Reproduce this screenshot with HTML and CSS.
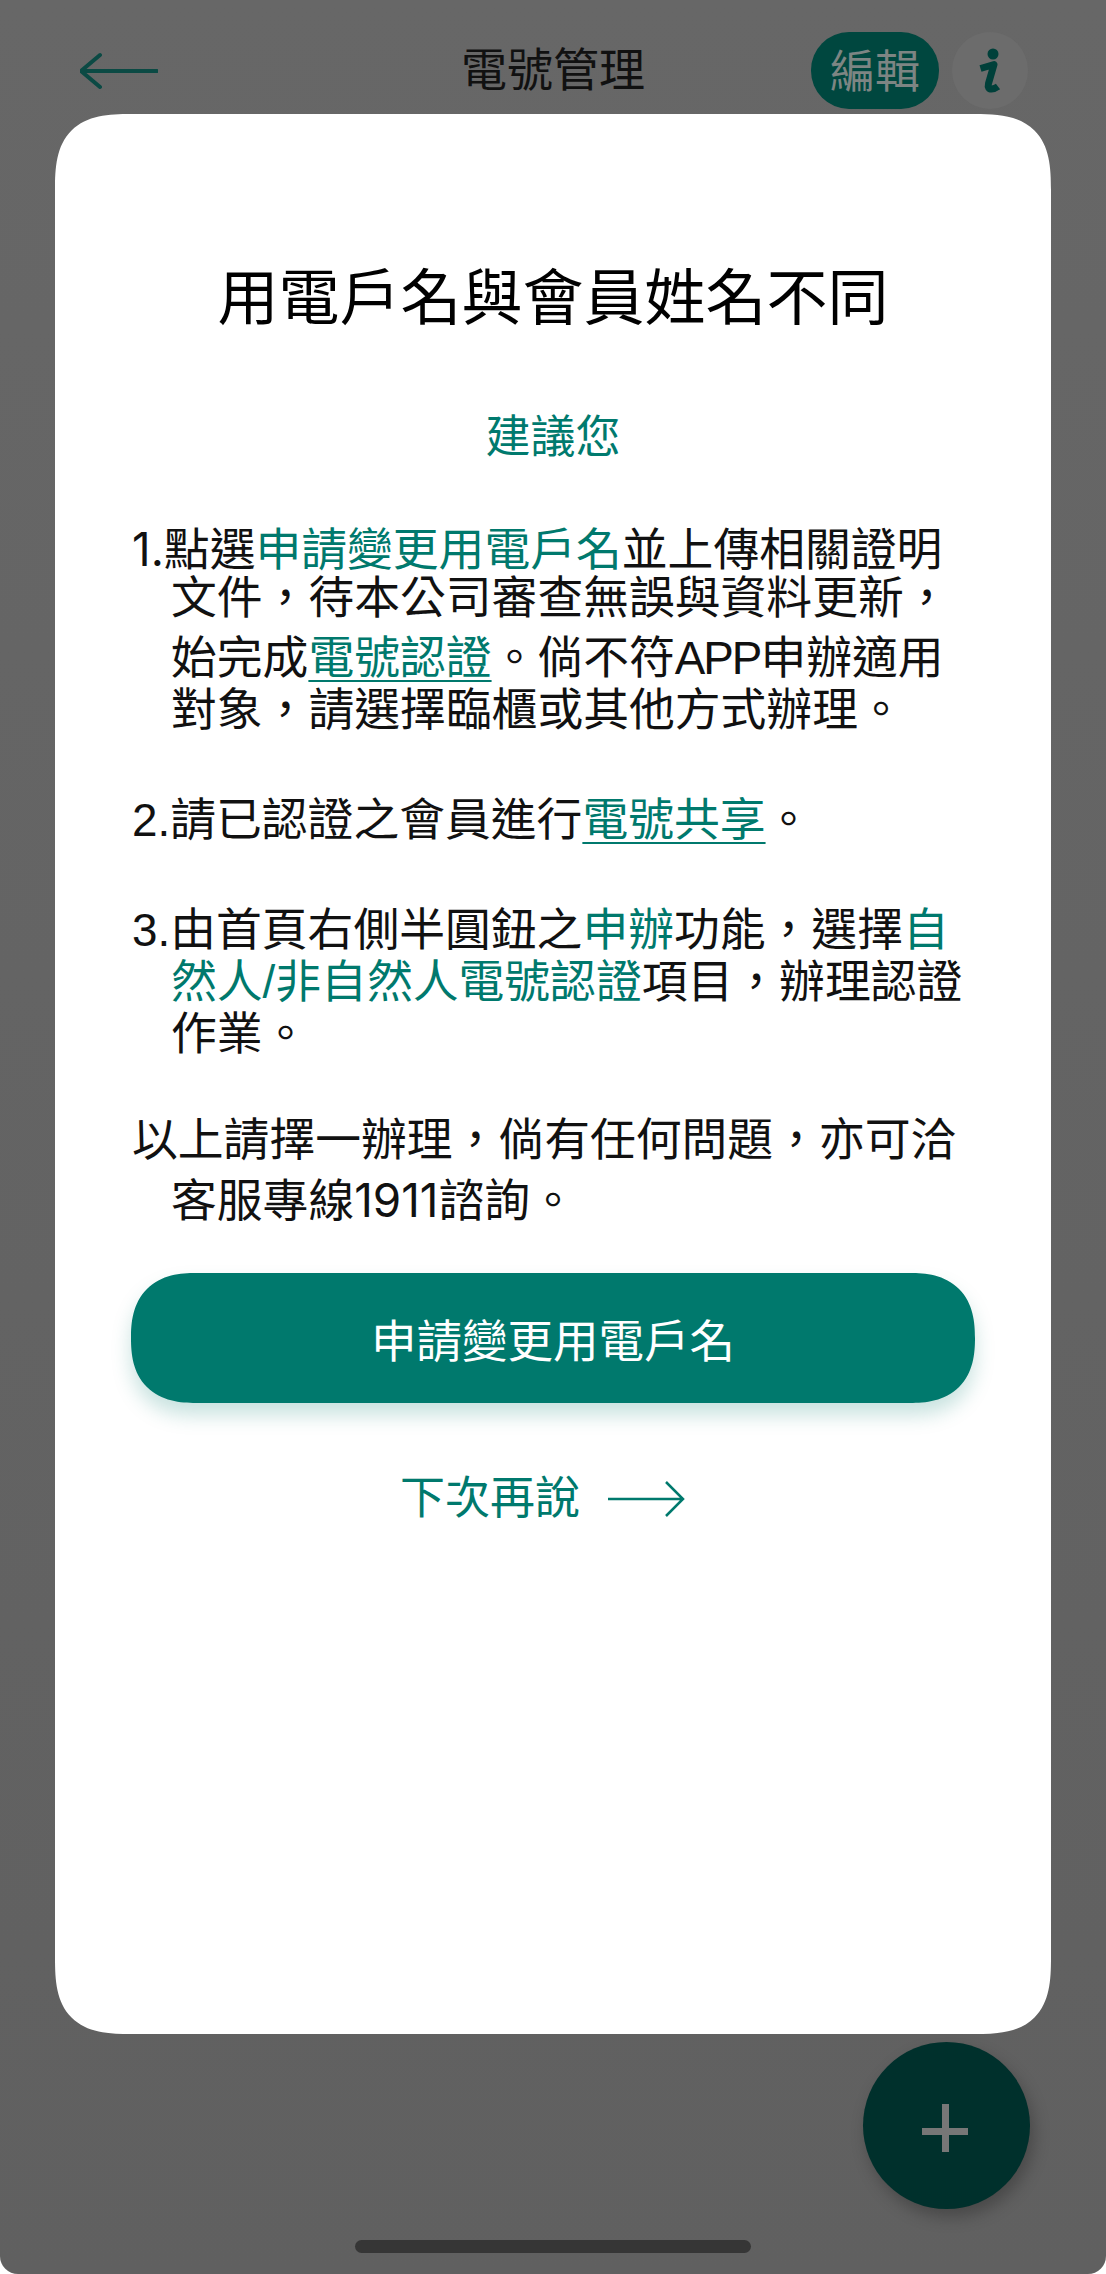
FILE: index.html
```html
<!DOCTYPE html>
<html lang="zh-Hant">
<head>
<meta charset="utf-8">
<title>電號管理</title>
<link rel="stylesheet" href="styles.css">
</head>
<body>
<div class="screen">
  <header class="topbar">
    <svg class="back" viewBox="0 0 78 38" aria-hidden="true"><path d="M20 3 1 19l19 16M1 19h76"/></svg>
    <h1 class="page-title">電號管理</h1>
    <div class="actions">
      <span class="edit">編輯</span>
      <span class="info" aria-label="i">
        <svg class="info-icon" viewBox="0 0 76 77" aria-hidden="true">
          <circle cx="41" cy="22" r="5.500"/>
          <path d="M28.500 36.500 42 32.500l-5.500 19c-1 4 .5 5.500 3 5.500 2.500 0 4.500-1 6.500-2.500"/>
        </svg>
      </span>
    </div>
  </header>

  <section class="modal">
    <h2 class="modal-title">用電戶名與會員姓名不同</h2>
    <p class="suggest">建議您</p>
    <div class="body">
      <p class="line first"><span class="num">1.</span>點選<span class="hl">申請變更用電戶名</span>並上傳相關證明</p>
      <p class="line tight indent">文件，待本公司審查無誤與資料更新，</p>
      <p class="line loose indent">始完成<a class="lnk">電號認證</a>。倘不符<span class="caps">APP</span>申辦適用</p>
      <p class="line indent">對象，請選擇臨櫃或其他方式辦理。</p>
      <p class="line para">2.請已認證之會員進行<a class="lnk">電號共享</a>。</p>
      <p class="line para">3.由首頁右側半圓鈕之<span class="hl">申辦</span>功能，選擇<span class="hl">自</span></p>
      <p class="line indent"><span class="hl">然人/非自然人電號認證</span>項目，辦理認證</p>
      <p class="line indent">作業。</p>
      <p class="line para2">以上請擇一辦理，倘有任何問題，亦可洽</p>
      <p class="line loose indent">客服專線<span class="num">1911</span>諮詢。</p>
    </div>
    <button class="primary">申請變更用電戶名</button>
    <div class="later">
      <span>下次再說</span>
      <svg class="later-arrow" viewBox="0 0 78 36" aria-hidden="true"><path d="M1 18h75M59 1l17 17-17 17"/></svg>
    </div>
  </section>

  <button class="fab" aria-label="新增"><span class="plus"></span></button>
  <div class="home-bar"></div>
</div>
</body>
</html>
```
FILE: styles.css
```css
* { box-sizing: border-box; margin: 0; padding: 0; }
html, body { background: #fff; }
body { width: 1106px; height: 2274px; overflow: hidden; font-family: "Liberation Sans", "Noto Sans CJK TC", sans-serif; }
.screen { position: relative; width: 1106px; height: 2274px; background: linear-gradient(#676767, #606060); border-radius: 0 0 18px 18px; overflow: hidden; }

.topbar { display: flex; align-items: center; height: 77px; padding: 0 78px 0 80px; position: relative; top: 32px; }
.back { width: 78px; height: 38px; fill: none; stroke: #0b4a44; stroke-width: 4px; stroke-linecap: round; stroke-linejoin: round; }
.page-title { position: absolute; left: 0; right: 0; text-align: center; font-size: 46px; line-height: 81px; font-weight: 400; color: #111; }
.actions { margin-left: auto; display: flex; gap: 13px; position: relative; }
.edit { width: 128px; height: 77px; border-radius: 38px; background: #00473f; color: #7d8583; font-size: 45px; line-height: 81px; text-align: center; }
.info { width: 76px; height: 77px; border-radius: 50%; background: #6c6c6c; }
.info-icon { display: block; width: 76px; height: 77px; }
.info-icon circle { fill: #00403a; }
.info-icon path { fill: none; stroke: #00403a; stroke-width: 7px; stroke-linejoin: round; }

.modal { position: absolute; left: 55px; top: 114px; width: 996px; height: 1920px; background: #fff; border-radius: 58px; display: flex; flex-direction: column; align-items: center; }
.modal-title { margin-top: 143px; font-size: 61px; line-height: 84px; font-weight: 400; color: #000; }
.suggest { margin-top: 67px; font-size: 45px; line-height: 60px; color: #007a6e; }

.body { align-self: stretch; padding-left: 77px; margin-top: 56px; color: #111; font-size: 45.800px; }
.line { line-height: 52px; white-space: nowrap; }
.indent { padding-left: 39px; }
.tight { margin-top: -4px; }
.loose { margin-top: 8px; }
.para { margin-top: 58px; }
.para2 { margin-top: 54px; }
.hl { color: #00796d; }
.num { font-family: "Inter", "Liberation Sans", sans-serif; }
.caps { letter-spacing: -2px; }
.lnk { color: #00796d; text-decoration: underline; text-underline-offset: 6px; text-decoration-thickness: 2px; }

.primary { margin-top: 45px; width: 844px; height: 130px; border: 0; border-radius: 60px; background: #00796d; color: #fff; font: inherit; font-size: 45.500px; box-shadow: 0 12px 20px rgba(0, 121, 109, .22); }
.later { margin-top: 66px; display: flex; align-items: center; gap: 27px; font-size: 45px; line-height: 60px; color: #00796d; margin-left: -21px; }
.later-arrow { width: 78px; height: 36px; fill: none; stroke: #00796d; stroke-width: 2.500; }

@supports (corner-shape: squircle) {
  .modal { border-radius: 76px; corner-shape: superellipse(1.5); }
  .primary { border-radius: 65px; corner-shape: superellipse(1.3); }
}

.fab { position: absolute; left: 863px; top: 2042px; width: 167px; height: 167px; border: 0; border-radius: 50%; background: #00302c; box-shadow: 4px 8px 16px rgba(0, 0, 0, .25); }
.plus { position: absolute; left: 59px; top: 62px; width: 46px; height: 48px; background: linear-gradient(#777, #777) center 24px / 46px 7px no-repeat, linear-gradient(#777, #777) center / 7px 48px no-repeat; }
.home-bar { position: absolute; left: 355px; top: 2240px; width: 396px; height: 13px; border-radius: 7px; background: #363636; }
```
